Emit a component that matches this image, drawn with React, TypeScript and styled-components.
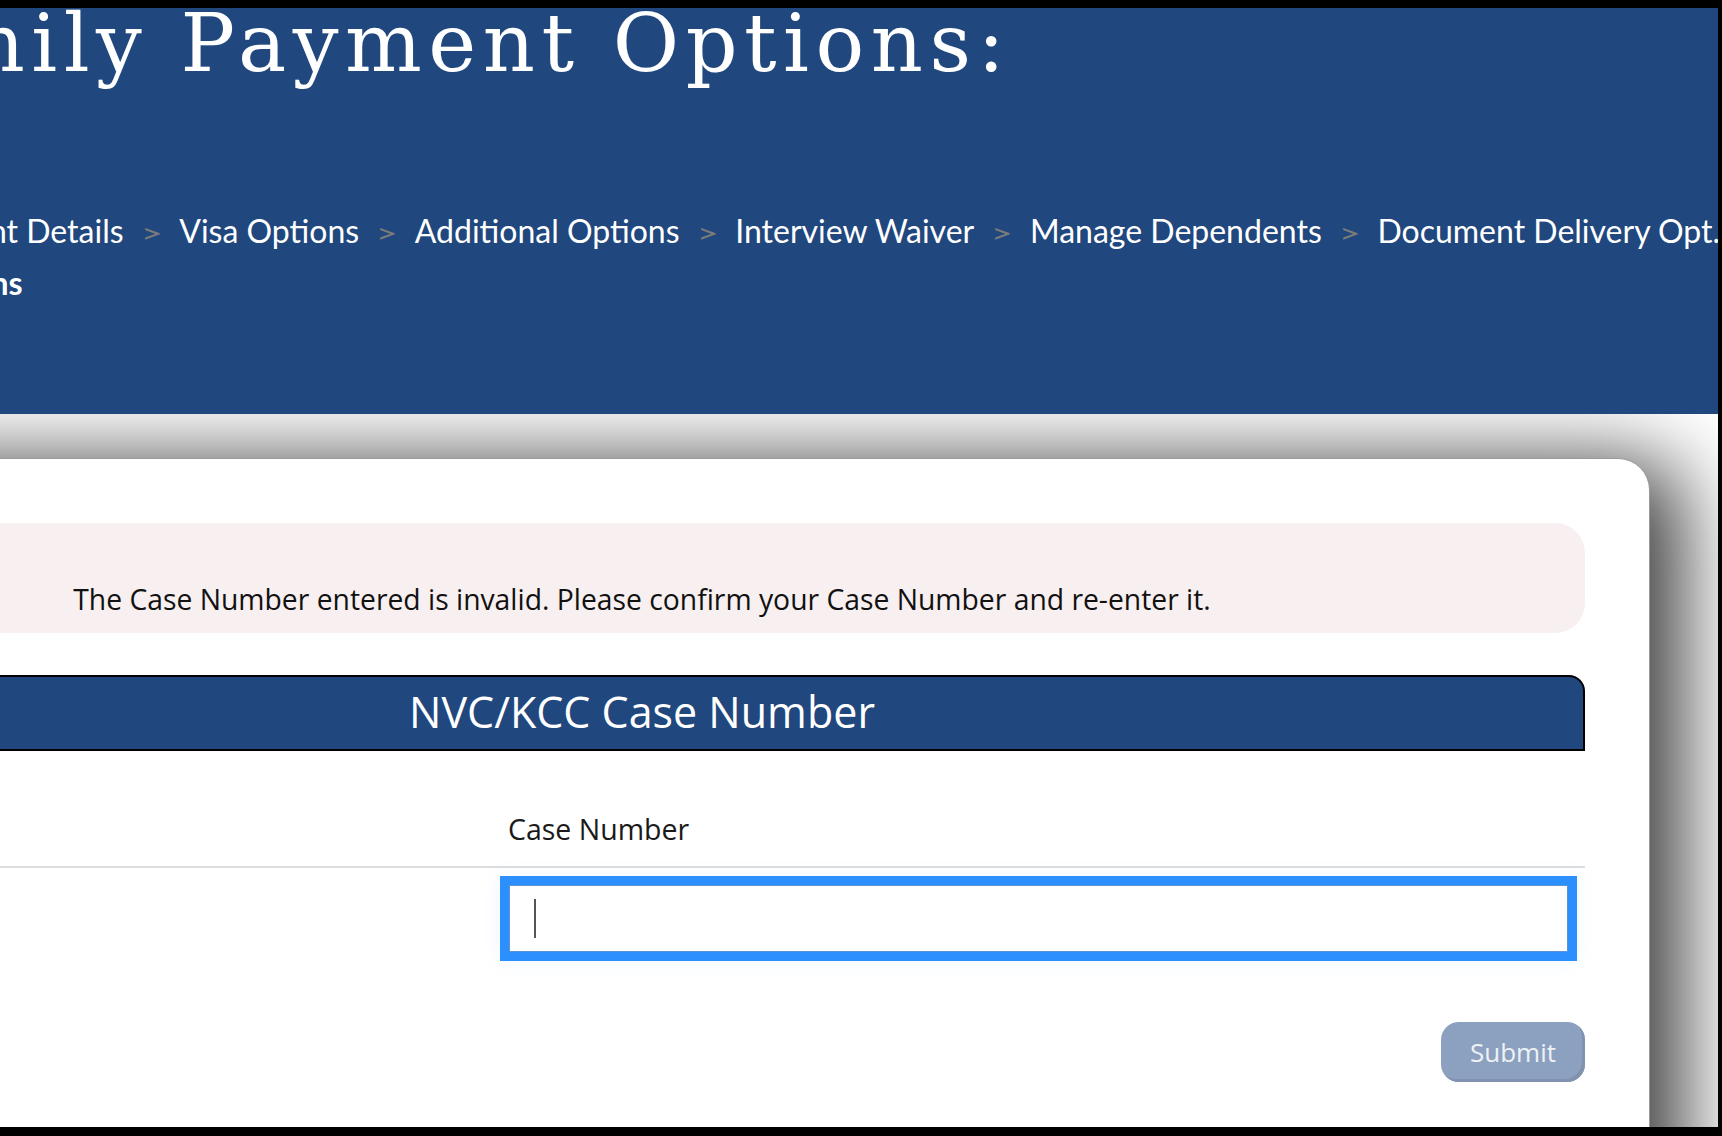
import React from "react";
import styled, { createGlobalStyle } from "styled-components";

const GlobalStyle = createGlobalStyle`
  html, body {
    margin: 0;
    padding: 0;
    background: #000;
  }
  body {
    font-family: "Open Sans", "Noto Sans", sans-serif;
  }
  *, *::before, *::after {
    box-sizing: border-box;
  }
`;

const BLUE = "#20477e";

const Frame = styled.div`
  width: 1722px;
  height: 1136px;
  padding: 8px 4px 9px 0;
  background: #000;
`;

const Viewport = styled.div`
  width: 1718px;
  height: 1119px;
  overflow: hidden;
  background: #fff;
`;

/* the document is scrolled sideways: its left part lies outside the window */
const Page = styled.div`
  width: 2118px;
  margin-left: -400px;
`;

const Header = styled.header`
  display: flow-root;
  position: relative;
  z-index: 1;
  height: 406px;
  padding-left: 308px;
  background: ${BLUE};
  color: #fff;
`;

const Title = styled.h1`
  margin: -13px 0 0 -72px;
  font-family: "DejaVu Serif", "Liberation Serif", serif;
  font-size: 81px;
  font-weight: 400;
  line-height: 96px;
  letter-spacing: 6.5px;
  white-space: nowrap;
`;

const Breadcrumb = styled.nav`
  margin-top: 115px;
  font-family: Lato, "Open Sans", sans-serif;
  font-size: 32px;
  line-height: 50px;
  text-indent: -23px;
  white-space: nowrap;
`;

const Crumb = styled.span`
  color: #fff;
`;

const Sep = styled.span`
  display: inline-block;
  margin: 0 20px 0 20px;
  color: #7b7b7b;
  font-size: 27px;
  text-indent: 0;
  transform: scaleX(1.4);
`;

const Current = styled.span`
  font-weight: 700;
`;

const Main = styled.main`
  padding: 44px 68px 0 34px;
`;

const Card = styled.section`
  min-height: 900px;
  padding: 64px 64px 80px;
  background: #fff;
  border: 1px solid #9a9a9a;
  border-radius: 32px 32px 0 0;
  box-shadow: 18px 18px 82px 16px rgba(0, 0, 0, 0.75);
`;

const Alert = styled.div`
  height: 110px;
  padding: 55px 24px 13px;
  background: #f8eff0;
  border-radius: 30px;
  color: #111;
  font-size: 28.3px;
  line-height: 42px;
  text-align: center;
`;

const Section = styled.div`
  margin-top: 42px;
`;

const SectionHeader = styled.h2`
  margin: 0;
  height: 76px;
  border: 2px solid #000;
  border-radius: 16px 16px 0 0;
  background: ${BLUE};
  color: #fff;
  font-size: 43px;
  font-weight: 400;
  line-height: 70px;
  text-align: center;
`;

const FieldRow = styled.div<{ $divided?: boolean }>`
  display: grid;
  grid-template-columns: 810px 1fr;
  padding: ${(p) => (p.$divided ? "56px 17px 15px 0" : "17px 17px 0 0")};
  border-bottom: ${(p) => (p.$divided ? "2px solid #dddddd" : "none")};
`;

const Label = styled.label`
  grid-column: 2;
  margin-left: -1px;
  color: #1a1a1a;
  font-size: 28.5px;
  line-height: 44px;
`;

const InputWrap = styled.div`
  grid-column: 2;
  position: relative;
`;

const CaseInput = styled.input`
  display: block;
  width: 100%;
  height: 67px;
  padding: 0 25px;
  border: 1px solid #5d93d4;
  border-radius: 0;
  outline: none;
  background: #fff;
  box-shadow: 0 0 0 9px #2b8ffe, 0 0 18px 10px rgba(43, 143, 254, 0.07);
  font-family: "Open Sans", sans-serif;
  font-size: 28px;
  color: #222;
`;

const Caret = styled.span`
  position: absolute;
  left: 25px;
  top: 14px;
  width: 2px;
  height: 39px;
  background: #555;
  pointer-events: none;
`;

const Actions = styled.div`
  display: flex;
  justify-content: flex-end;
  margin-top: 70px;
`;

const SubmitButton = styled.button`
  width: 144px;
  height: 60px;
  padding: 0;
  border: none;
  border-radius: 18px;
  background: #8ca1c0;
  box-shadow: inset -3px -3px 0 #8092ad;
  color: #eef1f6;
  font-family: "Open Sans", sans-serif;
  font-size: 26px;
  line-height: 60px;
  cursor: not-allowed;
`;

const steps = [
  "Applicant Details",
  "Visa Options",
  "Additional Options",
  "Interview Waiver",
  "Manage Dependents",
  "Document Delivery Opt.",
];

export default function App() {
  return (
    <>
      <GlobalStyle />
      <Frame>
        <Viewport>
          <Page>
            <Header>
              <Title>Family Payment Options:</Title>
              <Breadcrumb aria-label="Progress">
                {steps.map((s) => (
                  <React.Fragment key={s}>
                    <Crumb>{s}</Crumb>
                    <Sep>&gt;</Sep>
                  </React.Fragment>
                ))}
                <Current>
                  Family Payment
                  <br />
                  Options
                </Current>
              </Breadcrumb>
            </Header>
            <Main>
              <Card>
                <Alert role="alert">
                  The Case Number entered is invalid. Please confirm your Case Number and re-enter it.
                </Alert>
                <Section>
                  <SectionHeader>NVC/KCC Case Number</SectionHeader>
                  <FieldRow $divided>
                    <Label htmlFor="case-number">Case Number</Label>
                  </FieldRow>
                  <FieldRow>
                    <InputWrap>
                      <CaseInput id="case-number" type="text" />
                      <Caret />
                    </InputWrap>
                  </FieldRow>
                  <Actions>
                    <SubmitButton type="button" disabled>
                      Submit
                    </SubmitButton>
                  </Actions>
                </Section>
              </Card>
            </Main>
          </Page>
        </Viewport>
      </Frame>
    </>
  );
}
